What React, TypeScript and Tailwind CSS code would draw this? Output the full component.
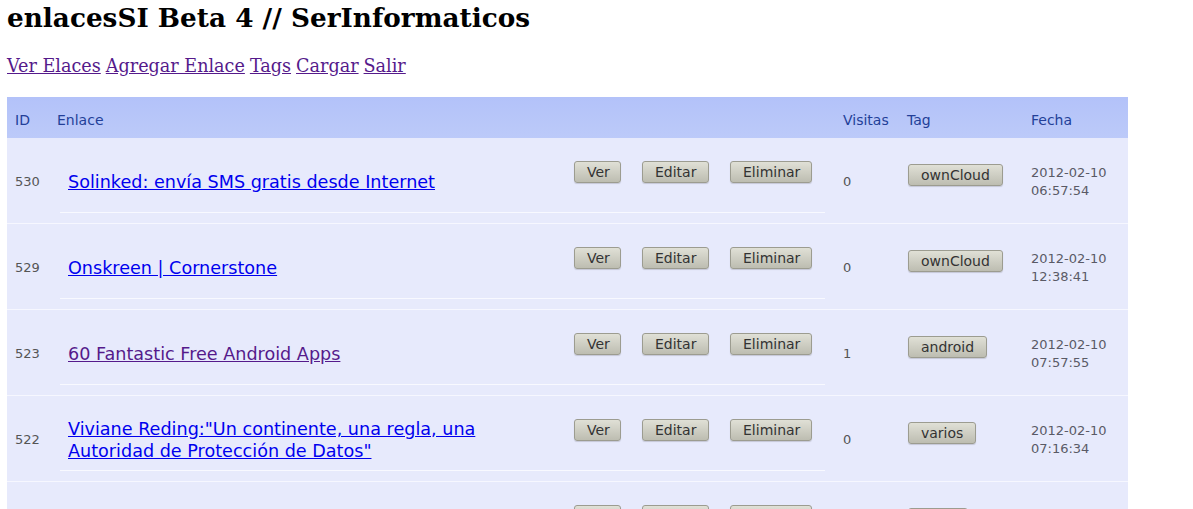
type Enlace = {
  id: number;
  title: string;
  visited?: boolean;
  visitas: number;
  tag: string;
  fecha: string;
  hora: string;
};

const ENLACES: Enlace[] = [
  { id: 530, title: 'Solinked: envía SMS gratis desde Internet', visitas: 0, tag: 'ownCloud', fecha: '2012-02-10', hora: '06:57:54' },
  { id: 529, title: 'Onskreen | Cornerstone', visitas: 0, tag: 'ownCloud', fecha: '2012-02-10', hora: '12:38:41' },
  { id: 523, title: '60 Fantastic Free Android Apps', visited: true, visitas: 1, tag: 'android', fecha: '2012-02-10', hora: '07:57:55' },
  { id: 522, title: 'Viviane Reding:"Un continente, una regla, una Autoridad de Protección de Datos"', visitas: 0, tag: 'varios', fecha: '2012-02-10', hora: '07:16:34' },
  { id: 521, title: 'Ubuntu 12.04 LTS Precise Pangolin', visitas: 0, tag: 'linux', fecha: '2012-02-09', hora: '22:10:05' },
];

const NAV = ['Ver Elaces', 'Agregar Enlace', 'Tags', 'Cargar', 'Salir'];

function Boton({ label, w }: { label: string; w?: string }) {
  return (
    <button
      className={`h-[22px] rounded-[3px] border border-[#9c9c90] bg-gradient-to-b from-[#e0e0d6] to-[#bdbdb1] px-[12px] text-[14px] leading-none text-[#333] shadow-[0_1px_1px_rgba(0,0,0,0.15)] ${w ?? ''}`}
    >
      {label}
    </button>
  );
}

function Fila({ e }: { e: Enlace }) {
  return (
    <div className="flex h-[86px] border-b border-[#f6f7ff] bg-[#e7eafc]">
      {/* id */}
      <div className="flex w-[43px] items-center pl-[8px] pt-[2px] text-[13px] text-[#555]">{e.id}</div>

      {/* enlace + acciones */}
      <div className="w-[785px] px-[10px]">
        <div className="flex h-[75px] border-b border-[#f8f9ff]">
          <div className="flex w-[500px] items-center pl-[8px] pt-[14px] text-[17.6px] leading-[22px]">
            <a
              href="#"
              className={`underline ${e.visited ? 'text-[#551a8b]' : 'text-[#0000ee]'}`}
            >
              {e.title}
            </a>
          </div>
          <div className="flex items-start gap-[21px] pl-[14px] pt-[23px]">
            <Boton label="Ver" w="w-[47px]" />
            <Boton label="Editar" w="w-[67px]" />
            <Boton label="Eliminar" w="w-[82px]" />
          </div>
        </div>
      </div>

      {/* visitas */}
      <div className="flex w-[65px] items-center pl-[8px] pt-[2px] text-[13px] text-[#555]">{e.visitas}</div>

      {/* tag */}
      <div className="w-[123px] pl-[8px] pt-[25px]">
        <Boton label={e.tag} />
      </div>

      {/* fecha */}
      <div className="flex w-[105px] flex-col justify-center pl-[8px] pt-[2px] text-[13px] leading-[18px] text-[#5a5a66]">
        <span>{e.fecha}</span>
        <span>{e.hora}</span>
      </div>
    </div>
  );
}

export default function App() {
  return (
    <div className="min-h-[509px] bg-white px-[7px] font-['DejaVu_Sans',sans-serif]">
      <h1 className="pt-[2px] font-['DejaVu_Serif',serif] text-[26.3px] font-bold leading-[32px] text-black">
        enlacesSI Beta 4 // SerInformaticos
      </h1>

      <nav className="mt-[19px] flex gap-[5px] font-['DejaVu_Serif',serif] text-[17.6px] leading-[26px]">
        {NAV.map((n) => (
          <a key={n} href="#" className="text-[#551a8b] underline">
            {n}
          </a>
        ))}
      </nav>

      <div className="mt-[18px] w-[1121px]">
        {/* cabecera */}
        <div className="flex h-[41px] items-center bg-gradient-to-b from-[#b3c2f9] to-[#bccaf9] pt-[6px] text-[14px] text-[#233f98]">
          <div className="w-[43px] pl-[8px]">ID</div>
          <div className="w-[785px] pl-[7px]">Enlace</div>
          <div className="w-[65px] pl-[8px]">Visitas</div>
          <div className="w-[123px] pl-[7px]">Tag</div>
          <div className="w-[105px] pl-[8px]">Fecha</div>
        </div>

        {ENLACES.map((e) => (
          <Fila key={e.id} e={e} />
        ))}
      </div>
    </div>
  );
}
